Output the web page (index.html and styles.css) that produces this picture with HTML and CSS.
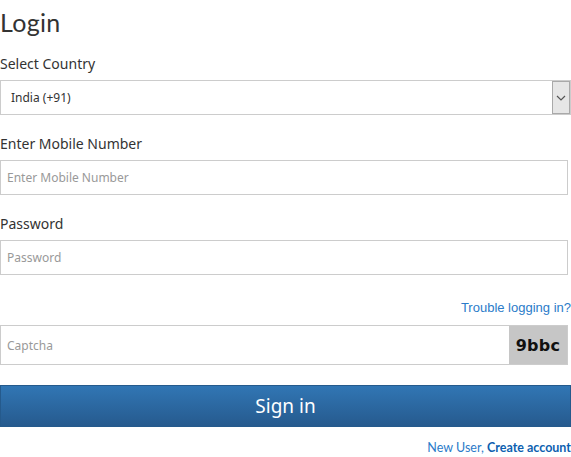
FILE: index.html
```html
<!DOCTYPE html>
<html>
<head>
<meta charset="utf-8">
<link rel="stylesheet" href="styles.css">
</head>
<body>
<div class="login">
  <h1 class="title">Login</h1>
  <label class="label">Select Country</label>
  <div class="select">
    <span class="select-value">India (+91)</span>
    <span class="select-btn"><svg width="10" height="6" viewBox="0 0 10 6"><path d="M1 1 L5 5 L9 1" fill="none" stroke="#555" stroke-width="1.2"/></svg></span>
  </div>
  <label class="label">Enter Mobile Number</label>
  <input class="input" type="text" placeholder="Enter Mobile Number">
  <label class="label">Password</label>
  <input class="input" type="password" placeholder="Password">
  <div class="trouble-row"><a class="trouble" href="#">Trouble logging in?</a></div>
  <div class="captcha-row">
    <input class="input captcha-input" type="text" placeholder="Captcha">
    <div class="captcha-img">9bbc</div>
  </div>
  <button class="signin">Sign in</button>
  <div class="new-user">New User, <a href="#">Create account</a></div>
</div>
</body>
</html>
```
FILE: styles.css
```css
* { box-sizing: border-box; }
body { margin: 0; background: #fff; font-family: "Open Sans", "Noto Sans", sans-serif; }
.login { width: 571px; display: flex; flex-direction: column; }
.title { margin: 6px 0 0 0; font-weight: 400; font-size: 25px; line-height: 32px; color: #333; font-family: "Lato", sans-serif; letter-spacing: 0.3px; }
.label { display: block; font-size: 14px; color: #333; margin-top: 20px; line-height: 18px; margin-bottom: 7px; font-family: "Noto Sans", sans-serif; }
.title + .label { margin-top: 17px; }
.select { width: 571px; height: 35px; border: 1px solid #ccc; display: flex; align-items: center; }
.select-value { flex: 1; padding-left: 10px; font-size: 12px; color: #333; font-family: "Noto Sans", sans-serif; }
.select-btn { width: 18px; height: 33px; background: #e6e6e6; border: 1px solid #a9a9a9; display: flex; align-items: center; justify-content: center; }
.input { display: block; width: 568px; height: 35px; border: 1px solid #ccc; padding: 0 6px; font-size: 12px; font-family: "Noto Sans", sans-serif; color: #333; outline: none; }
.input::placeholder { color: #999; }
.trouble-row { display: flex; justify-content: flex-end; align-items: center; margin-top: 23px; height: 18px; }
.trouble { font-family: "Liberation Sans", Arial, sans-serif; font-size: 13px; color: #2b7bc9; text-decoration: none; }
.captcha-row { display: flex; margin-top: 9px; height: 40px; width: 568px; }
.captcha-input { flex: 1; width: auto; height: 40px; border-right: none; }
.captcha-img { width: 59px; height: 40px; background: #c6c6c6; border: 1px solid #ccc; border-left: none; display: flex; align-items: center; justify-content: center; font-family: "DejaVu Sans", sans-serif; font-weight: bold; font-size: 16px; color: #111; letter-spacing: 0.3px; }
.signin { margin-top: 20px; width: 571px; height: 42px; border: 1px solid #255a8c; background: linear-gradient(#3176b4, #265a8e); color: #fff; font-size: 19px; font-family: "Noto Sans", sans-serif; }
.new-user { margin-top: 13px; text-align: right; font-size: 12.5px; color: #2b7bc9; font-family: "Lato", sans-serif; }
.new-user a { color: #0d5fb0; font-weight: bold; text-decoration: none; }
```
